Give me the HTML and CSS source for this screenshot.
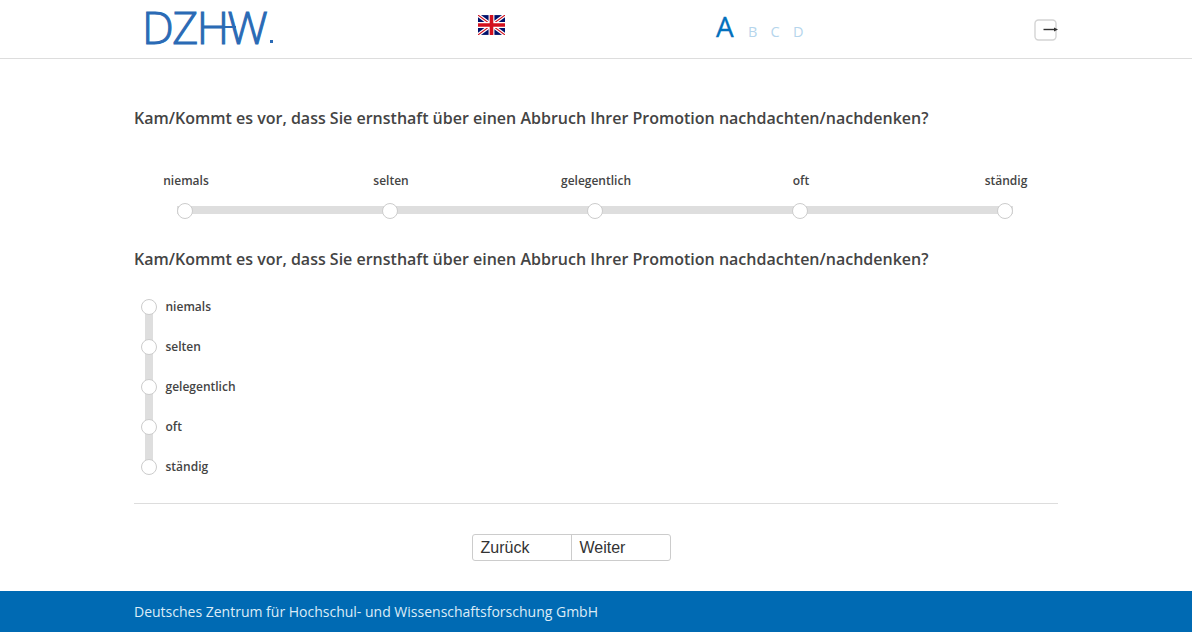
FILE: index.html
```html
<!DOCTYPE html>
<html lang="de">
<head>
<meta charset="utf-8">
<title>DZHW</title>
<link rel="stylesheet" href="styles.css">
</head>
<body>
<header class="header">
  <div class="wrap header-row">
    <div class="logo"><span class="logo-text">DZHW</span><span class="logo-dot"></span><span class="logo-bar"></span></div>
    <svg class="flag" viewBox="0 0 60 44" width="27" height="20" aria-label="English">
      <rect width="60" height="44" fill="#00116b"/>
      <path d="M0 0L60 44M60 0L0 44" stroke="#fff" stroke-width="8"/>
      <path d="M0 0L60 44M60 0L0 44" stroke="#d3101e" stroke-width="2.6"/>
      <path d="M30 0V44M0 22H60" stroke="#fff" stroke-width="13"/>
      <path d="M30 0V44M0 22H60" stroke="#d3101e" stroke-width="8"/>
    </svg>
    <div class="sizes">
      <span class="size-active">A</span>
      <span class="size">B</span>
      <span class="size">C</span>
      <span class="size">D</span>
    </div>
    <svg class="exit" viewBox="0 0 24 22" width="24" height="22" aria-label="Abmelden">
      <rect x="1" y="1" width="21" height="20" rx="3.5" fill="#fff" stroke="#d4d4d4" stroke-width="1.4"/>
      <path d="M9.5 10.5H20" stroke="#333" stroke-width="1.4"/>
      <path d="M20 8.5L24 10.5L20 12.5Z" fill="#333"/>
    </svg>
  </div>
</header>
<main class="wrap main">
  <h2 class="question question-first">Kam/Kommt es vor, dass Sie ernsthaft über einen Abbruch Ihrer Promotion nachdachten/nachdenken?</h2>
  <div class="scale">
    <div class="scale-labels">
      <span class="scale-label">niemals</span>
      <span class="scale-label">selten</span>
      <span class="scale-label">gelegentlich</span>
      <span class="scale-label">oft</span>
      <span class="scale-label">ständig</span>
    </div>
    <div class="scale-track">
      <span class="dot"></span><span class="dot"></span><span class="dot"></span><span class="dot"></span><span class="dot"></span>
    </div>
  </div>
  <h2 class="question question-second">Kam/Kommt es vor, dass Sie ernsthaft über einen Abbruch Ihrer Promotion nachdachten/nachdenken?</h2>
  <ul class="vscale">
    <li class="vitem"><span class="dot"></span><span class="vlabel">niemals</span></li>
    <li class="vitem"><span class="dot"></span><span class="vlabel">selten</span></li>
    <li class="vitem"><span class="dot"></span><span class="vlabel">gelegentlich</span></li>
    <li class="vitem"><span class="dot"></span><span class="vlabel">oft</span></li>
    <li class="vitem"><span class="dot"></span><span class="vlabel">ständig</span></li>
  </ul>
  <div class="actions">
    <div class="btn-group">
      <button class="btn" type="button">Zurück</button>
      <button class="btn" type="button">Weiter</button>
    </div>
  </div>
</main>
<footer class="footer">
  <div class="wrap">Deutsches Zentrum für Hochschul- und Wissenschaftsforschung GmbH</div>
</footer>
</body>
</html>
```
FILE: styles.css
```css
* { box-sizing: border-box; }
html, body { margin: 0; padding: 0; background: #fff; }
body { font-family: "Open Sans", sans-serif; color: #444; overflow: hidden; height: 641px; }
.wrap { width: 924px; margin: 0 auto; }

.header { height: 59px; border-bottom: 1px solid #ddd; }
.header-row { height: 58px; display: flex; align-items: flex-start; }
.logo {
  flex: none; width: 344px; height: 58px; padding-left: 8px; position: relative;
  font-family: "Open Sans", sans-serif; font-weight: 300; font-size: 45px; line-height: 54px;
  letter-spacing: -1.5px; color: #2a6ab5; white-space: nowrap; -webkit-text-stroke: 1px #2a6ab5;
}
.logo-text { display: inline-block; padding-right: 4px; }
.logo-dot { position: absolute; left: 136px; top: 40px; width: 3px; height: 3px; background: #2a6ab5; }
.logo-bar { position: absolute; left: 74px; top: 26px; width: 28px; height: 2px; background: #2a6ab5; }
.flag { margin-top: 15px; flex: none; }
.sizes { margin-left: 211px; width: 318px; display: flex; align-items: baseline; height: 58px; padding-top: 6px; }
.size-active { font-size: 28px; line-height: 40px; width: 32px; color: #0370bd; -webkit-text-stroke: .3px #0370bd; }
.size { font-size: 14.5px; color: #b5d5ec; width: 22.5px; }
.exit { margin-top: 19px; flex: none; }

.question { margin: 0; font-size: 16px; font-weight: 600; line-height: 24px; color: #444; }
.question-first { padding-top: 47px; }
.question-second { margin-top: 28px; }

.scale { padding-top: 42px; }
.scale-labels { display: grid; grid-template-columns: repeat(5, 205px); margin-left: -50.5px; width: 1025px; }
.scale-label { text-align: center; font-size: 12px; font-weight: 600; line-height: 17px; color: #444; }
.scale-track {
  margin: 14px 0 0 43px; width: 836px; height: 16px; display: flex; justify-content: space-between; align-items: center;
  background: linear-gradient(#dedede, #dedede) 0 3px / 100% 8px no-repeat;
}
.dot { width: 16px; height: 16px; border-radius: 50%; background: #fff; border: 1px solid #ccc; flex: none; display: block; }

.vscale { list-style: none; margin: 16px 0 0; padding: 0 0 0 7px; }
.vitem { display: flex; align-items: center; height: 40px; position: relative; }
.vitem:not(:last-child)::before { content: ""; position: absolute; left: 4px; top: 20px; width: 8px; height: 40px; background: #dedede; }
.vitem .dot { position: relative; }
.vlabel { margin: 0 0 2px 8.5px; font-size: 12px; font-weight: 600; color: #444; }

.actions { margin-top: 16px; border-top: 1px solid #ddd; padding: 30px 0 0 338px; display: flex; height: 88px; }
.btn-group { display: flex; height: 27px; width: 199px; border: 1px solid #ccc; border-radius: 3px; background: #fff; }
.btn {
  flex: 0 0 98px; padding: 0 0 0 7.5px; margin: 0; border: 0; background: none; text-align: left;
  font-family: "Liberation Sans", Arial, sans-serif; font-size: 16px; color: #333;
}
.btn + .btn { border-left: 1px solid #ccc; flex-basis: 99px; }

.footer { background: #006ab3; height: 41px; color: #dcecf7; font-size: 14px; line-height: 42px; }
```
